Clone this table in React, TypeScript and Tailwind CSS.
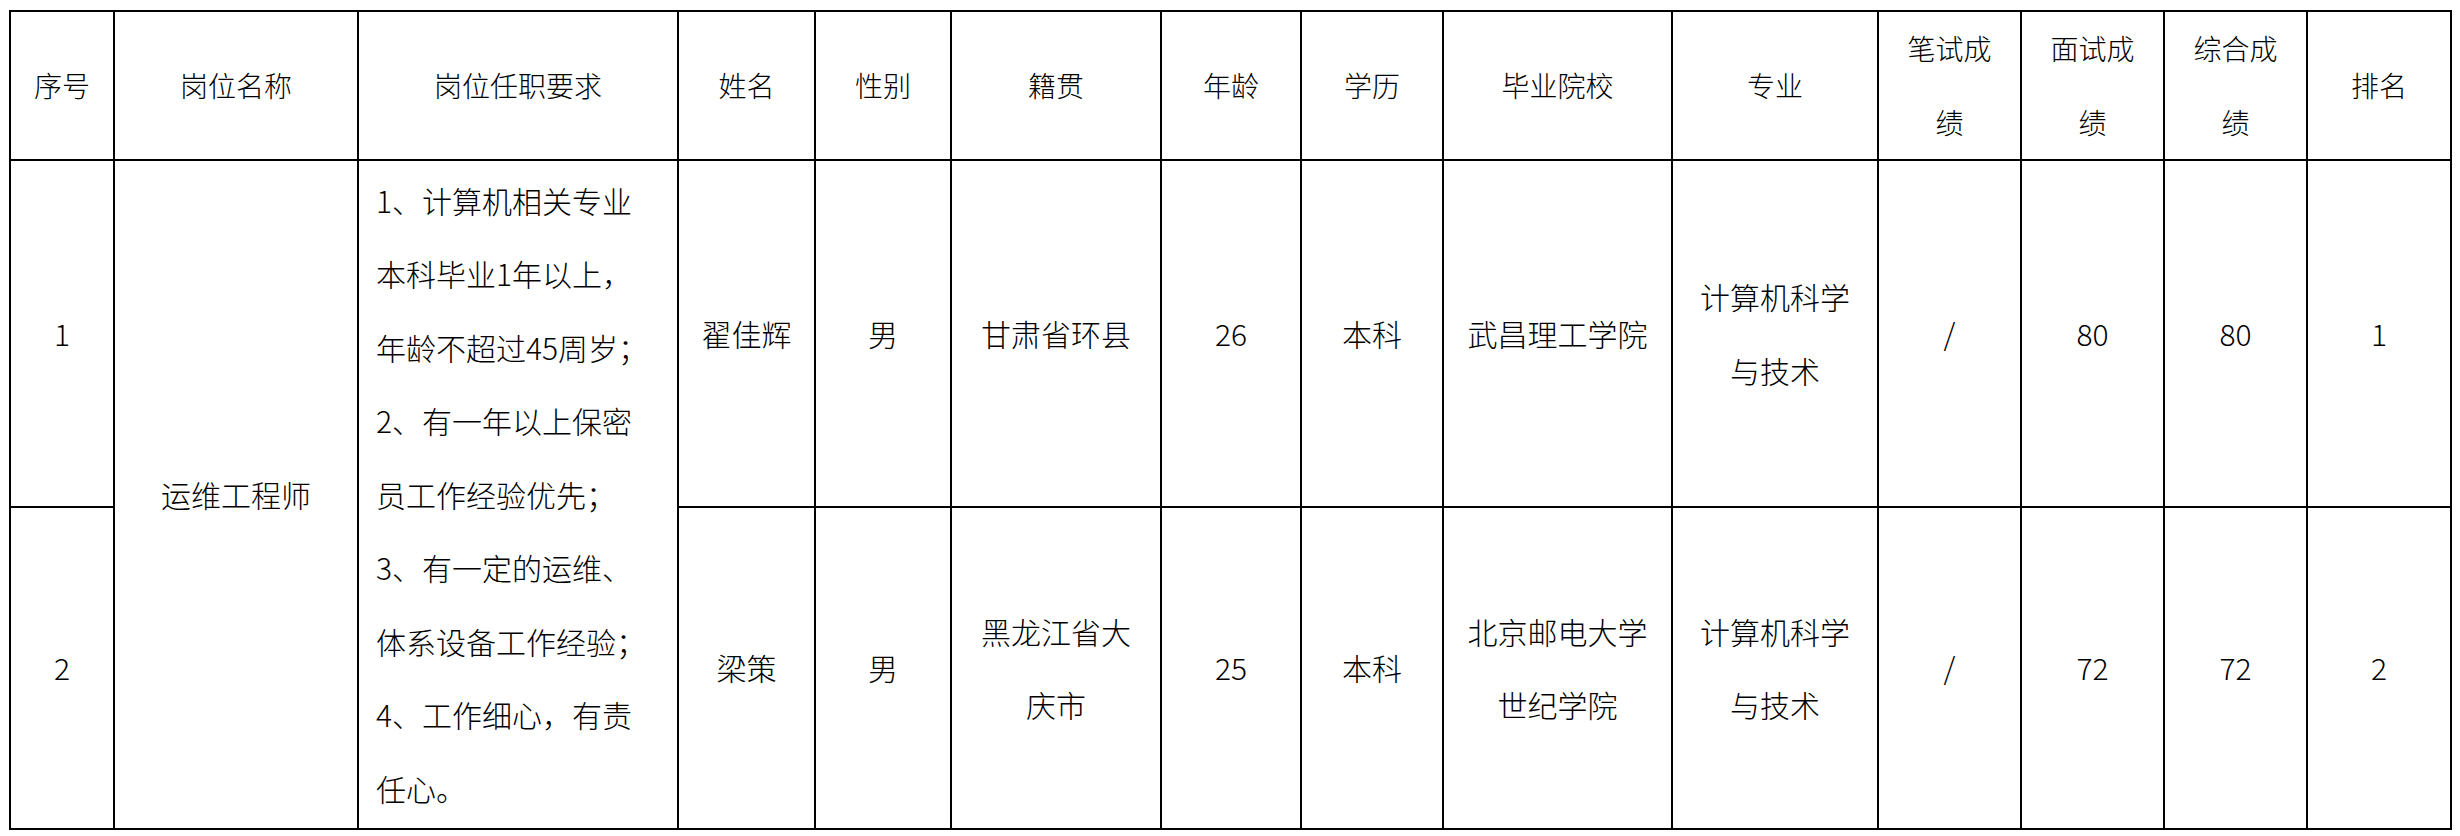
const colWidths = [104, 244, 320, 137, 136, 210, 140, 142, 229, 206, 143, 143, 143, 144];

const headers = [
  ["序号"],
  ["岗位名称"],
  ["岗位任职要求"],
  ["姓名"],
  ["性别"],
  ["籍贯"],
  ["年龄"],
  ["学历"],
  ["毕业院校"],
  ["专业"],
  ["笔试成", "绩"],
  ["面试成", "绩"],
  ["综合成", "绩"],
  ["排名"],
];

const requirements = [
  "1、计算机相关专业",
  "本科毕业1年以上，",
  "年龄不超过45周岁；",
  "2、有一年以上保密",
  "员工作经验优先；",
  "3、有一定的运维、",
  "体系设备工作经验；",
  "4、工作细心，有责",
  "任心。",
];

type Row = {
  no: string;
  name: string;
  gender: string;
  origin: string[];
  age: string;
  degree: string;
  school: string[];
  major: string[];
  written: string;
  interview: string;
  total: string;
  rank: string;
};

const rows: Row[] = [
  {
    no: "1",
    name: "翟佳辉",
    gender: "男",
    origin: ["甘肃省环县"],
    age: "26",
    degree: "本科",
    school: ["武昌理工学院"],
    major: ["计算机科学", "与技术"],
    written: "/",
    interview: "80",
    total: "80",
    rank: "1",
  },
  {
    no: "2",
    name: "梁策",
    gender: "男",
    origin: ["黑龙江省大", "庆市"],
    age: "25",
    degree: "本科",
    school: ["北京邮电大学", "世纪学院"],
    major: ["计算机科学", "与技术"],
    written: "/",
    interview: "72",
    total: "72",
    rank: "2",
  },
];

function Lines({ lines }: { lines: string[] }) {
  return (
    <>
      {lines.map((l, i) => (
        <div key={i}>{l}</div>
      ))}
    </>
  );
}

const cell = "border-r-2 border-b-2 border-black p-0 text-center align-middle";

function Cell({ lines, rowSpan }: { lines: string[]; rowSpan?: number }) {
  return (
    <td rowSpan={rowSpan} className={cell}>
      <Lines lines={lines} />
    </td>
  );
}

export default function App() {
  return (
    <div className="min-h-screen bg-white pl-[9px] pt-[10px] font-['Noto_Sans_CJK_SC',sans-serif] font-light text-black">
      <table className="w-[2443px] table-fixed border-separate border-spacing-0 border-l-2 border-t-2 border-black leading-[73.5px]">
        <colgroup>
          {colWidths.map((w, i) => (
            <col key={i} style={{ width: w }} />
          ))}
        </colgroup>
        <thead>
          <tr className="h-[147px] text-[28px]">
            {headers.map((h, i) => (
              <th key={i} className={`${cell} font-light`}>
                <Lines lines={h} />
              </th>
            ))}
          </tr>
        </thead>
        <tbody className="text-[30px]">
          {rows.map((r, idx) => (
            <tr key={r.no} className={idx === 0 ? "h-[347px]" : "h-[322px]"}>
              <Cell lines={[r.no]} />
              {idx === 0 && (
                <>
                  <Cell lines={["运维工程师"]} rowSpan={2} />
                  <td rowSpan={2} className="border-r-2 border-b-2 border-black p-0 pl-[17px] text-left align-middle">
                    <Lines lines={requirements} />
                  </td>
                </>
              )}
              <Cell lines={[r.name]} />
              <Cell lines={[r.gender]} />
              <Cell lines={r.origin} />
              <Cell lines={[r.age]} />
              <Cell lines={[r.degree]} />
              <Cell lines={r.school} />
              <Cell lines={r.major} />
              <Cell lines={[r.written]} />
              <Cell lines={[r.interview]} />
              <Cell lines={[r.total]} />
              <Cell lines={[r.rank]} />
            </tr>
          ))}
        </tbody>
      </table>
    </div>
  );
}
